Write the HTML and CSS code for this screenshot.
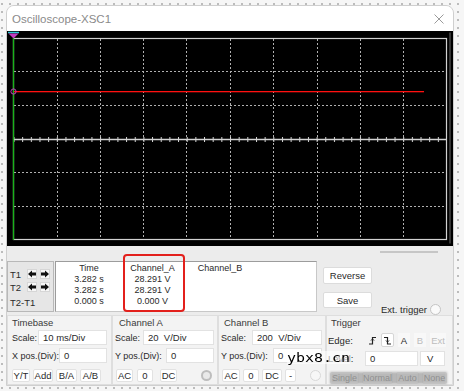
FILE: index.html
```html
<!DOCTYPE html>
<html lang="en">
<head>
  <meta charset="UTF-8">
  <title>Oscilloscope-XSC1</title>
  <link rel="stylesheet" href="styles.css">
</head>
<body>

  <div class="window">
    <div class="titlebar">
      <span class="title">Oscilloscope-XSC1</span>
      <svg class="close" width="10" height="10" viewBox="0 0 10 10">
        <path d="M0.5 0.5 L9.5 9.5 M9.5 0.5 L0.5 9.5" stroke="#9a9a9a" stroke-width="1"/>
      </svg>
    </div>

    <div class="screen">
      <svg width="446" height="215" viewBox="0 0 446 215">
        <defs>
          <pattern id="ticks" patternUnits="userSpaceOnUse" x="6.5" y="0" width="8.66" height="215">
            <line x1="0.5" y1="106" x2="0.5" y2="111" stroke="#d8d8d8" stroke-width="1"/>
          </pattern>
        </defs>
        <rect x="442.5" y="1.5" width="1" height="211" fill="#6a6a6a"/>
        <g stroke="#b0b0b0" stroke-width="1" stroke-dasharray="2 2">
          <line x1="50.5" y1="8" x2="50.5" y2="208"/>
          <line x1="93.5" y1="8" x2="93.5" y2="208"/>
          <line x1="136.5" y1="8" x2="136.5" y2="208"/>
          <line x1="179.5" y1="8" x2="179.5" y2="208"/>
          <line x1="223.5" y1="8" x2="223.5" y2="208"/>
          <line x1="266.5" y1="8" x2="266.5" y2="208"/>
          <line x1="310.5" y1="8" x2="310.5" y2="208"/>
          <line x1="353.5" y1="8" x2="353.5" y2="208"/>
          <line x1="396.5" y1="8" x2="396.5" y2="208"/>
          <line x1="7" y1="40.5" x2="439" y2="40.5"/>
          <line x1="7" y1="74.5" x2="439" y2="74.5"/>
          <line x1="7" y1="141.5" x2="439" y2="141.5"/>
          <line x1="7" y1="175.5" x2="439" y2="175.5"/>
        </g>
        <rect x="6" y="106" width="434" height="5" fill="url(#ticks)"/>
        <line x1="6" y1="108.5" x2="440" y2="108.5" stroke="#d4d4d4" stroke-width="1.5"/>
        <rect x="6.5" y="7.5" width="433" height="201" fill="none" stroke="#d2d2d2" stroke-width="1.2"/>
        <line x1="6.5" y1="7" x2="6.5" y2="209" stroke="#19b219" stroke-width="1.3"/>
        <rect x="7" y="60" width="410" height="1.3" fill="#ff1010"/>
        <circle cx="6.5" cy="60.5" r="2.6" fill="none" stroke="#c23bc2" stroke-width="1"/>
        <line x1="1" y1="1.5" x2="12" y2="1.5" stroke="#2ec9d6" stroke-width="1.5"/>
        <polygon points="1.5,2.5 11.5,2.5 6.5,7.5" fill="#c23bc2"/>
      </svg>
    </div>

    <div class="gap"><div class="scroll"></div></div>

    <div class="meas">
      <div class="tbox">
        <div class="trow">
          <span class="tlabel">T1</span>
          <span class="arrow"><svg width="8" height="8" viewBox="0 0 8 8"><path d="M0 4 L4 0.5 V2.6 H8 V5.4 H4 V7.5 Z" fill="#111"/></svg></span>
          <span class="arrow"><svg width="8" height="8" viewBox="0 0 8 8"><path d="M8 4 L4 0.5 V2.6 H0 V5.4 H4 V7.5 Z" fill="#111"/></svg></span>
        </div>
        <div class="trow">
          <span class="tlabel">T2</span>
          <span class="arrow"><svg width="8" height="8" viewBox="0 0 8 8"><path d="M0 4 L4 0.5 V2.6 H8 V5.4 H4 V7.5 Z" fill="#111"/></svg></span>
          <span class="arrow"><svg width="8" height="8" viewBox="0 0 8 8"><path d="M8 4 L4 0.5 V2.6 H0 V5.4 H4 V7.5 Z" fill="#111"/></svg></span>
        </div>
        <div class="tdiff">T2-T1</div>
      </div>

      <div class="data">
        <span>Time</span><span>Channel_A</span><span>Channel_B</span>
        <span>3.282 s</span><span>28.291 V</span><span></span>
        <span>3.282 s</span><span>28.291 V</span><span></span>
        <span>0.000 s</span><span>0.000 V</span><span></span>
      </div>

      <div class="side">
        <div class="btncol">
          <div class="wide">Reverse</div>
          <div class="wide save">Save</div>
        </div>
        <div class="ext">Ext. trigger <span class="radio"></span></div>
      </div>
    </div>

    <div class="controls">
      <div class="panel timebase">
        <div class="head">Timebase</div>
        <div class="row"><span class="lbl">Scale:</span><span class="field w69">10 ms/Div</span></div>
        <div class="row"><span class="lbl">X pos.(Div):</span><span class="field w49">0</span></div>
        <div class="btns">
          <span class="sb w18">Y/T</span><span class="sb w20">Add</span><span class="sb w21">B/A</span><span class="sb w21">A/B</span>
        </div>
      </div>

      <div class="panel cha">
        <div class="head">Channel A</div>
        <div class="row"><span class="lbl">Scale:</span><span class="field w71">20  V/Div</span></div>
        <div class="row"><span class="lbl">Y pos.(Div):</span><span class="field w48">0</span></div>
        <div class="btns">
          <span class="sb w17">AC</span><span class="sb w16">0</span><span class="sb w17 dc">DC</span><span class="ring"></span>
        </div>
      </div>

      <div class="panel chb">
        <div class="head">Channel B</div>
        <div class="row"><span class="lbl">Scale:</span><span class="field w70">200  V/Div</span></div>
        <div class="row"><span class="lbl">Y pos.(Div):</span><span class="field w49">0</span></div>
        <div class="btns">
          <span class="sb w18">AC</span><span class="sb w16">0</span><span class="sb w20">DC</span><span class="sb w11">-</span><span class="ring light"></span>
        </div>
      </div>

      <div class="panel trigger">
        <div class="head">Trigger</div>
        <div class="edge">
          <span class="elabel">Edge:</span>
          <span class="eb"><svg width="9" height="9" viewBox="0 0 9 9"><path d="M1 8 H4.5 V1.5 H8" fill="none" stroke="#222" stroke-width="1.2"/><path d="M3 4.5 L4.5 3 L6 4.5" fill="none" stroke="#222" stroke-width="1"/></svg></span>
          <span class="eb on"><svg width="9" height="9" viewBox="0 0 9 9"><path d="M1 1.5 H4.5 V8 H8" fill="none" stroke="#222" stroke-width="1.2"/><path d="M3 4.5 L4.5 6 L6 4.5" fill="none" stroke="#222" stroke-width="1"/></svg></span>
          <span class="eb txt">A</span>
          <span class="eb txt off">B</span>
          <span class="eb txt off ext-b">Ext</span>
        </div>
        <div class="level">
          <span class="elabel">Level:</span>
          <span class="field w53">0</span>
          <span class="field w25">V</span>
        </div>
        <div class="modes">
          <span class="sb w29">Single</span><span class="sb w31">Normal</span><span class="sb w23">Auto</span><span class="sb w25">None</span>
        </div>
      </div>
    </div>

    <div class="mark"></div>
    <div class="blur"></div>
    <div class="watermark">ybx8.cn</div>
  </div>

</body>
</html>
```

FILE: styles.css
```css
body {
  margin: 0;
  width: 464px;
  height: 391px;
  overflow: hidden;
  background-color: #f6f6f6;
  background-image: radial-gradient(#bcbcbc 0.8px, transparent 1.2px);
  background-size: 8px 8px;
  background-position: -2px 0;
  font-family: "Liberation Sans", Arial, sans-serif;
  color: #2a2a2a;
}

.window {
  position: relative;
  box-sizing: border-box;
  width: 448px;
  height: 381px;
  margin: 5px 0 0 6px;
  border: 1px solid #cfcfcf;
  border-radius: 8px 8px 0 0;
  background: #ececec;
  display: flex;
  flex-direction: column;
}

.titlebar {
  height: 25px;
  flex: none;
  display: flex;
  align-items: center;
  justify-content: space-between;
  padding: 0 9px 0 5px;
  background: #fff;
  border-radius: 7px 7px 0 0;
}

.title {
  font-size: 11.5px;
  color: #8a8a8a;
}

.screen {
  height: 215px;
  flex: none;
  background: #000;
}

.screen svg {
  display: block;
}

.gap {
  height: 15px;
  flex: none;
  display: flex;
  justify-content: flex-end;
  padding-right: 15px;
}

.scroll {
  width: 58px;
  height: 2px;
  margin-top: 5px;
  background: #c6c6c6;
}

/* cursor readout */
.meas {
  height: 51px;
  flex: none;
  display: flex;
  font-size: 9px;
}

.tbox {
  width: 47px;
  box-sizing: border-box;
  background: #e6e6e6;
  border: 1px solid #b8b8b8;
  padding: 7px 0 0 2px;
}

.trow {
  display: flex;
  align-items: center;
  height: 10px;
  margin-bottom: 3px;
}

.tlabel {
  width: 17px;
  font-size: 9.5px;
}

.arrow {
  width: 10px;
  height: 10px;
  margin-right: 3px;
  box-sizing: border-box;
  background: #f7f7f7;
  border: 1px solid #d6d6d6;
  display: flex;
  align-items: center;
  justify-content: center;
}

.tdiff {
  margin-top: 5px;
  font-size: 9.5px;
}

.data {
  width: 262px;
  margin-left: 1px;
  box-sizing: border-box;
  background: #fff;
  border: 1px solid #c8c8c8;
  border-top-color: #9c9c9c;
  border-left-color: #9c9c9c;
  padding-top: 1px;
  display: grid;
  grid-template-columns: 66px 61px 74px;
  grid-auto-rows: 11px;
  align-content: start;
  text-align: center;
  line-height: 11px;
}

.side {
  margin-left: 6px;
  display: flex;
}

.btncol {
  display: flex;
  flex-direction: column;
  padding-top: 6px;
}

.wide {
  width: 49px;
  height: 17px;
  box-sizing: border-box;
  background: #fff;
  border: 1px solid #dcdcdc;
  border-radius: 2px;
  text-align: center;
  line-height: 15px;
  font-size: 9.5px;
}

.save {
  height: 16px;
  margin-top: 8px;
}

.ext {
  align-self: flex-end;
  margin: 0 0 -3px 9px;
  display: flex;
  align-items: center;
  gap: 3px;
  font-size: 9.5px;
  white-space: nowrap;
}

.radio {
  width: 11px;
  height: 11px;
  box-sizing: border-box;
  border: 1px solid #c4c4c4;
  border-radius: 50%;
  background: #fafafa;
}

/* control panels */
.controls {
  height: 70px;
  flex: none;
  margin-top: 3px;
  display: flex;
  font-size: 9.5px;
}

.panel {
  box-sizing: border-box;
  border: 1px solid #dedede;
  background: #f3f3f3;
  display: flex;
  flex-direction: column;
}

.head {
  height: 14px;
  line-height: 14px;
  color: #3a3a3a;
}

.timebase { width: 105px; padding: 0 4px 0 4px; }
.cha { width: 106px; padding: 0 3px 0 2px; }
.chb { width: 108px; padding: 0 3px 0 2px; }
.trigger { width: 127px; padding: 0 0 0 1px; }

.cha .head { padding-left: 4px; }
.chb .head { padding-left: 3px; }
.trigger .head { padding-left: 3px; }

.row {
  display: flex;
  justify-content: space-between;
  align-items: center;
  height: 15px;
  margin-bottom: 3px;
}

.lbl {
  font-size: 9px;
  white-space: nowrap;
}

.field {
  height: 15px;
  box-sizing: border-box;
  background: #fff;
  border: 1px solid #e2e2e2;
  padding-left: 4px;
  line-height: 13px;
  white-space: pre;
}

.btns {
  display: flex;
  align-items: center;
  gap: 3px;
  margin-top: 3px;
}

.cha .btns { padding-left: 1px; gap: 4px; }
.chb .btns { padding-left: 1px; gap: 3px; }

.sb {
  height: 13px;
  box-sizing: border-box;
  background: #fff;
  border: 1px solid #e2e2e2;
  border-radius: 2px;
  line-height: 11px;
  text-align: center;
}

.dc { margin-left: 3px; }

.ring {
  width: 11px;
  height: 11px;
  box-sizing: border-box;
  margin-left: 20px;
  border: 2.5px solid #bdbdbd;
  border-radius: 50%;
  background: #e9e9e9;
}

.ring.light {
  margin-left: 11px;
  border: 1px solid #d8d8d8;
  background: #f7f7f7;
}

.w11 { width: 11px; }
.w16 { width: 16px; }
.w17 { width: 17px; }
.w18 { width: 18px; }
.w20 { width: 20px; }
.w21 { width: 21px; }
.w23 { width: 23px; }
.w25 { width: 25px; }
.w29 { width: 29px; }
.w31 { width: 31px; }
.w48 { width: 48px; }
.w49 { width: 49px; }
.w53 { width: 53px; }
.w69 { width: 69px; }
.w70 { width: 70px; }
.w71 { width: 71px; }

.edge,
.level {
  display: flex;
  align-items: center;
}

.edge {
  height: 14px;
  margin-top: 3px;
  gap: 3px;
}

.elabel {
  width: 35px;
  flex: none;
}

.eb {
  width: 12px;
  height: 14px;
  box-sizing: border-box;
  display: flex;
  align-items: center;
  justify-content: center;
  border: 1px solid transparent;
}

.eb.on {
  width: 13px;
  background: #fff;
  border-color: #d6d6d6;
  border-radius: 2px;
}

.eb.txt {
  background: #f8f8f8;
  margin-left: 1px;
}

.eb.off { color: #bdbdbd; }

.ext-b { width: 16px; }

.level {
  height: 15px;
  margin-top: 4px;
  gap: 2px;
}

.level .w25 { padding-left: 6px; }

.modes {
  display: flex;
  gap: 3px;
  margin-top: 6px;
  padding-left: 2px;
}

.modes .sb {
  height: 12px;
  line-height: 10px;
  font-size: 9px;
}

/* overlays */
.mark {
  position: absolute;
  left: 116px;
  top: 248px;
  width: 62px;
  height: 58px;
  box-sizing: border-box;
  border: 2px solid #e3201c;
  border-radius: 4px;
}

.blur {
  position: absolute;
  left: 323px;
  top: 366px;
  width: 117px;
  height: 12px;
  background: rgba(168, 168, 168, 0.8);
  filter: blur(1px);
}

.watermark {
  position: absolute;
  left: 280px;
  top: 345px;
  font-family: "DejaVu Sans Mono", monospace;
  font-size: 13px;
  line-height: 13px;
  color: #000;
  transform: scaleX(1.15);
  transform-origin: left center;
  background: rgba(255, 255, 255, 0.6);
}
```
